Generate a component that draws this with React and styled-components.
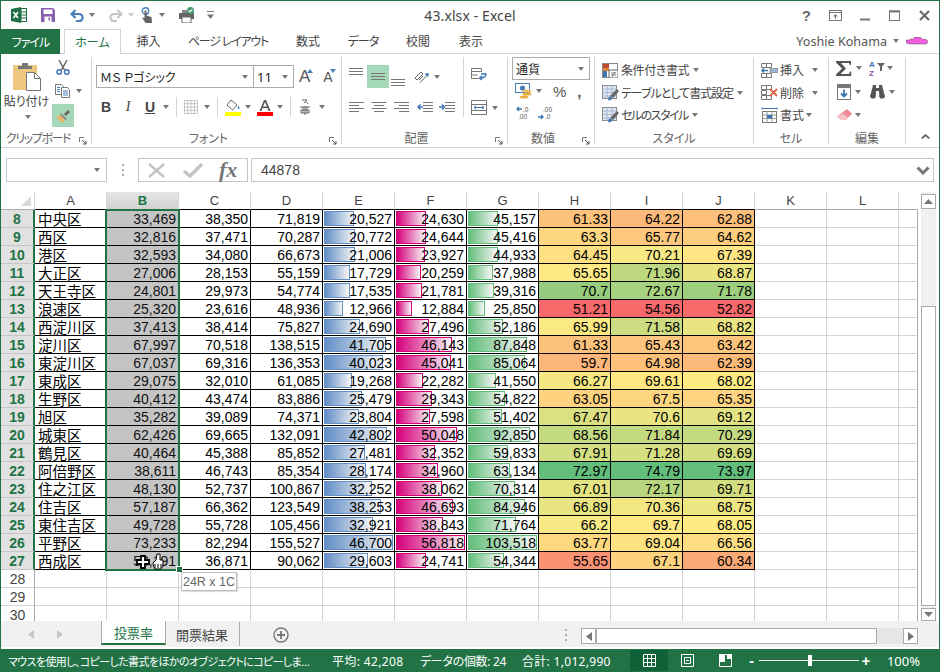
import React from 'react'
import styled, { createGlobalStyle } from 'styled-components'

const GREEN = '#217346'
const LINE = '#d4d4d4'

const GlobalStyle = createGlobalStyle`
  html, body { margin: 0; padding: 0; background: #fff; overflow: hidden; }
  * { box-sizing: border-box; }
`

const Window = styled.div`
  width: 940px;
  height: 672px;
  border: 1px solid ${GREEN};
  border-bottom: 0;
  display: flex;
  flex-direction: column;
  font-family: "Noto Sans", "Noto Sans CJK JP", sans-serif;
  font-feature-settings: "palt";
  font-size: 12px;
  color: #444;
  background: #fff;
  overflow: hidden;
`

const Svg = styled.svg`
  display: block;
  flex-shrink: 0;
  margin-left: ${(p) => p.$ml || 0}px;
  margin-top: ${(p) => p.$mt || 0}px;
`

const Caret = styled.span`
  display: block;
  flex-shrink: 0;
  width: 0;
  height: 0;
  margin-left: ${(p) => p.$ml || 0}px;
  margin-top: ${(p) => p.$mt || 0}px;
  border-left: 3.5px solid transparent;
  border-right: 3.5px solid transparent;
  border-top: 4px solid ${(p) => p.$color || '#777'};
`

/* ---------- title bar ---------- */
const TitleBar = styled.div`
  height: 28px;
  display: grid;
  grid-template-columns: 1fr auto 1fr;
  align-items: center;
`
const QuickAccess = styled.div`
  display: flex;
  align-items: center;
`
const TitleText = styled.div`
  font-size: 14px;
  color: #444;
  letter-spacing: 0.1px;
`
const WindowControls = styled.div`
  display: flex;
  justify-content: flex-end;
`
const WindowButton = styled.div`
  width: 29.5px;
  height: 24px;
  display: flex;
  align-items: center;
  justify-content: center;
  font: bold 15px "Liberation Sans", sans-serif;
  color: #6a6a6a;
`

/* ---------- tabs ---------- */
const TabRow = styled.div`
  height: 25px;
  display: flex;
  align-items: stretch;
  border-bottom: 1px solid ${LINE};
`
const FileTab = styled.div`
  width: 59px;
  margin-bottom: -1px;
  background: ${GREEN};
  color: #fff;
  display: flex;
  align-items: center;
  justify-content: center;
  font-size: 12px;
  letter-spacing: -1px;
`
const Tab = styled.div`
  width: ${(p) => p.$w}px;
  margin-left: ${(p) => p.$ml || 0}px;
  display: flex;
  align-items: center;
  justify-content: center;
  white-space: nowrap;
  letter-spacing: ${(p) => p.$ls || 0}px;
  color: ${(p) => (p.$active ? GREEN : '#444')};
  ${(p) =>
    p.$active &&
    `
    border: 1px solid ${LINE};
    border-bottom: 0;
    background: #fff;
    margin-bottom: -1px;
    padding-bottom: 1px;
  `}
`
const UserArea = styled.div`
  margin-left: auto;
  display: flex;
  align-items: center;
  padding-right: 11px;
  font-size: 12.6px;
  color: #555;
`

/* ---------- ribbon ---------- */
const Ribbon = styled.div`
  height: 94px;
  padding-top: 3px;
  display: flex;
  border-bottom: 1px solid ${LINE};
`
const Group = styled.div`
  width: ${(p) => p.$w}px;
  height: 87px;
  border-right: 1px solid ${LINE};
  display: flex;
  flex-direction: column;
  flex-shrink: 0;
`
const GroupBody = styled.div`
  height: 73px;
  flex-shrink: 0;
  display: flex;
`
const GroupLabel = styled.div`
  position: relative;
  height: 14px;
  line-height: 14px;
  margin-top: ${(p) => p.$mt ?? 2}px;
  display: flex;
  align-items: center;
  justify-content: center;
  padding-right: ${(p) => (p.$launcher ? 16 : 0)}px;
  color: #666;
  font-size: 12px;
  letter-spacing: ${(p) => p.$ls || 0}px;
  white-space: nowrap;
`
const Launcher = styled.svg`
  position: absolute;
  right: 4px;
  top: 5px;
`
const Column = styled.div`
  display: flex;
  flex-direction: column;
  align-items: ${(p) => p.$align || 'flex-start'};
  width: ${(p) => (p.$w ? `${p.$w}px` : 'auto')};
  padding-top: ${(p) => p.$pt || 0}px;
  ${(p) => p.$divider && `border-right: 1px solid ${LINE}; height: 60px;`}
`
const Row = styled.div`
  display: flex;
  align-items: center;
  height: ${(p) => p.$h}px;
  margin-top: ${(p) => p.$mt || 0}px;
  padding-left: ${(p) => p.$pl || 0}px;
`
const PasteLabel = styled.div`
  margin-top: 3px;
  line-height: 15px;
  font-size: 12px;
  color: #444;
  white-space: nowrap;
`
const HighlightButton = styled.div`
  width: ${(p) => p.$w}px;
  height: ${(p) => p.$h}px;
  margin-left: ${(p) => p.$ml || 0}px;
  margin-top: ${(p) => p.$mt || 0}px;
  background: #a5d8b8;
  display: flex;
  align-items: center;
  justify-content: center;
  flex-shrink: 0;
`
const ComboBox = styled.div`
  width: ${(p) => p.$w}px;
  height: 23px;
  margin-left: ${(p) => p.$ml || 0}px;
  border: 1px solid #ababab;
  background: #fff;
  display: flex;
  align-items: center;
  justify-content: space-between;
  padding: 0 5px 0 3px;
  color: #222;
  font-size: ${(p) => p.$fs || 12}px;
`
const GrowGlyph = styled.span`
  margin-left: ${(p) => p.$ml || 0}px;
  display: flex;
  align-items: flex-start;
  font: ${(p) => p.$size}px "Liberation Sans", sans-serif;
  line-height: 18px;
  color: #555;
`
const FormatGlyph = styled.span`
  width: 22px;
  text-align: center;
  font: ${(p) => (p.$italic ? 'italic 14px "Liberation Serif"' : 'bold 14px "Liberation Sans"')}, sans-serif;
  text-decoration: ${(p) => (p.$under ? 'underline' : 'none')};
  color: #444;
`
const VSep = styled.span`
  display: block;
  width: 1px;
  height: 20px;
  margin-left: ${(p) => p.$ml || 0}px;
  background: ${LINE};
  flex-shrink: 0;
`
const NumberGlyph = styled.span`
  margin-left: ${(p) => p.$ml}px;
  font: ${(p) => (p.$bold ? 'bold ' : '')}${(p) => p.$size || 15}px "Liberation Sans", sans-serif;
  color: #555;
`
const CommandRow = styled.div`
  display: flex;
  align-items: center;
  height: 22.5px;
  padding-left: 7px;
  color: #444;
`
const CommandText = styled.span`
  margin-left: ${(p) => p.$ml || 3}px;
  white-space: nowrap;
  letter-spacing: ${(p) => p.$ls || 0}px;
  width: ${(p) => (p.$w ? `${p.$w}px` : 'auto')};
`
const CollapseSlot = styled.div`
  flex: 1;
  display: flex;
  justify-content: flex-end;
  align-items: flex-end;
  padding: 0 9px 5px 0;
  height: 87px;
`

/* ---------- formula bar ---------- */
const FormulaBar = styled.div`
  height: 44px;
  padding: 10px 0 10px 5px;
  display: flex;
`
const NameBox = styled.div`
  width: 101px;
  border: 1px solid #c6c6c6;
  display: flex;
  align-items: center;
  justify-content: flex-end;
  padding-right: 6px;
`
const FormulaDots = styled.div`
  width: 31px;
  display: flex;
  justify-content: center;
  align-items: center;
`
const FxBox = styled.div`
  width: 110px;
  border: 1px solid #c6c6c6;
  display: flex;
  align-items: center;
  padding-left: 9px;
`
const FxGlyph = styled.span`
  margin-left: 16px;
  font: italic bold 22px "Liberation Serif", serif;
  color: #777;
  line-height: 22px;
`
const FormulaInput = styled.div`
  width: 683px;
  margin-left: 3px;
  border: 1px solid #c6c6c6;
  display: flex;
  align-items: center;
  justify-content: space-between;
  padding: 0 3px 0 9px;
  font: 14px "Liberation Sans", sans-serif;
  color: #444;
`

/* ---------- sheet ---------- */
const SheetArea = styled.div`
  height: 429px;
  display: flex;
`
const GridWrap = styled.div`
  position: relative;
  width: 920px;
  overflow: hidden;
`
const SheetGrid = styled.div`
  display: grid;
  grid-template-columns: 34px repeat(12, 72px) 19px;
  grid-auto-rows: 18px;
`
const CornerCell = styled.div`
  position: relative;
  border-right: 1px solid ${LINE};
  border-bottom: 1px solid #ababab;
`
const CornerMark = styled.svg`
  position: absolute;
  right: 3px;
  bottom: 3px;
`
const ColHead = styled.div`
  display: flex;
  align-items: center;
  justify-content: center;
  font: ${(p) => (p.$selected ? 'bold ' : '')}13px "Liberation Sans", sans-serif;
  color: ${(p) => (p.$selected ? GREEN : '#444')};
  background: ${(p) => (p.$selected ? 'linear-gradient(#e6e6e6, #d2d2d2)' : '#fff')};
  border-right: ${(p) => (p.$bare ? '0' : `1px solid ${LINE}`)};
  border-bottom: 1px solid ${(p) => (p.$table ? '#000' : '#ababab')};
`
const RowHead = styled.div`
  display: flex;
  align-items: center;
  justify-content: center;
  font: ${(p) => (p.$selected ? 'bold ' : '')}14px "Liberation Sans", sans-serif;
  color: ${(p) => (p.$selected ? GREEN : '#444')};
  background: ${(p) => (p.$selected ? '#e1e1e1' : '#fff')};
  border-right: ${(p) => (p.$selected ? `2px solid ${GREEN}` : '1px solid #ababab')};
  border-bottom: 1px solid ${(p) => (p.$selected ? '#c6c6c6' : LINE)};
`
const Cell = styled.div`
  position: relative;
  display: flex;
  align-items: center;
  justify-content: ${(p) => (p.$text ? 'flex-start' : 'flex-end')};
  padding: ${(p) => (p.$text ? '3px 0 0 3px' : '2px 2px 0 0')};
  font: ${(p) => (p.$text ? '14.5px "Liberation Sans", "Noto Sans CJK JP"' : '14px "Liberation Sans"')}, sans-serif;
  line-height: 15px;
  color: ${(p) => (p.$selected ? '#111' : '#000')};
  background: ${(p) => (p.$selected ? '#c4c4c4' : 'transparent')};
  border-right: 1px solid #000;
  border-bottom: 1px solid #000;
  white-space: nowrap;
`
const CellValue = styled.span`
  position: relative;
`
const BlankCell = styled.div`
  border-right: 1px solid ${(p) => (p.$edge ? '#ababab' : LINE)};
  border-bottom: 1px solid ${LINE};
`
const DataBar = styled.span`
  position: absolute;
  left: 1px;
  top: 1px;
  height: 15px;
  border: 1px solid ${(p) => p.$color};
  background: linear-gradient(90deg, ${(p) => p.$color}, #f6f6f6);
`
const SelectionBox = styled.div`
  position: absolute;
  left: 104px;
  top: 17px;
  width: 75px;
  height: 362px;
  border: 2px solid ${GREEN};
  pointer-events: none;
`
const FillHandle = styled.span`
  position: absolute;
  right: -5px;
  bottom: -4px;
  width: 7px;
  height: 7px;
  background: ${GREEN};
  border: 1px solid #fff;
`
const RangeTip = styled.div`
  position: absolute;
  left: 180px;
  top: 380px;
  width: 56px;
  height: 19px;
  background: #fff;
  border: 1px solid #bdbdbd;
  box-shadow: 1px 1px 1px #ddd;
  display: flex;
  align-items: center;
  justify-content: center;
  font: 12.5px "Liberation Sans", sans-serif;
  color: #666;
`
const BrushCursor = styled.svg`
  position: absolute;
  left: 134px;
  top: 361px;
`
const VScroll = styled.div`
  width: 15px;
  margin-left: 0;
  background: #f0f0f0;
  display: flex;
  flex-direction: column;
  padding-top: 2px;
  padding-bottom: 0;
`
const ScrollButton = styled.div`
  width: ${(p) => p.$w || 15}px;
  height: ${(p) => p.$h || 15}px;
  background: #fff;
  border: 1px solid #ababab;
  display: flex;
  align-items: center;
  justify-content: center;
  flex-shrink: 0;
`
const VThumb = styled.div`
  margin-top: ${(p) => p.$mt}px;
  height: ${(p) => p.$h}px;
  background: #fff;
  border: 1px solid #ababab;
`

/* ---------- sheet tabs ---------- */
const SheetBar = styled.div`
  height: 26px;
  background: #f1f1f1;
  display: flex;
  align-items: flex-start;
`
const SheetNav = styled.div`
  width: 100px;
  height: 26px;
  display: flex;
  align-items: center;
`
const SheetTab = styled.div`
  width: 65px;
  height: 24px;
  background: #fff;
  border-left: 1px solid #ababab;
  border-right: 1px solid #ababab;
  border-bottom: 2px solid ${GREEN};
  display: flex;
  align-items: center;
  justify-content: center;
  font-size: 13px;
  color: ${GREEN};
`
const SheetTabPlain = styled.div`
  width: 74px;
  height: 24px;
  margin-top: 1px;
  display: flex;
  align-items: center;
  padding-left: 10px;
  font-size: 13px;
  color: #444;
  border-right: 1px solid #ababab;
`
const HScroll = styled.div`
  width: 337px;
  height: 16px;
  margin-top: 7px;
  margin-left: 14px;
  background: #e6e6e6;
  display: flex;
`
const HThumb = styled.div`
  width: 281px;
  background: #fff;
  border: 1px solid #ababab;
`

/* ---------- status bar ---------- */
const StatusBar = styled.div`
  height: 23px;
  margin-top: 2px;
  background: ${GREEN};
  color: #fff;
  display: flex;
  align-items: center;
  font-size: 12px;
`
const StatusItem = styled.div`
  width: ${(p) => p.$w}px;
  padding-left: ${(p) => p.$pl || 0}px;
  font-size: ${(p) => p.$fs || 12}px;
  letter-spacing: ${(p) => p.$ls || 0}px;
  white-space: nowrap;
  overflow: hidden;
  flex-shrink: 0;
`
const ViewButton = styled.div`
  width: 38px;
  height: 21px;
  background: ${(p) => (p.$active ? '#0f6237' : 'transparent')};
  display: flex;
  align-items: center;
  justify-content: center;
`
const ZoomSign = styled.div`
  width: ${(p) => p.$w}px;
  text-align: center;
  font: bold 15px "Liberation Sans", sans-serif;
`
const ZoomSlider = styled.div`
  position: relative;
  width: 100px;
  height: 1px;
  background: #fff;
`
const ZoomThumb = styled.span`
  position: absolute;
  left: 49px;
  top: -5px;
  width: 4px;
  height: 11px;
  background: #fff;
`
const ZoomPercent = styled.div`
  flex: 1;
  text-align: right;
  padding-right: 19px;
  font-size: 13px;
`

/* ---------- icons ---------- */
const ExcelLogo = (p) => (
  <Svg {...p} width="16" height="16" viewBox="0 0 16 16">
    <rect x="6" y="1.5" width="9.5" height="13" fill="#fff" stroke="#1e7145" />
    <path d="M10 2v12M6 5h9M6 8h9M6 11h9" stroke="#1e7145" strokeWidth="1" />
    <path d="M0 2 10 0v16L0 14z" fill="#1e7145" />
    <path d="M2.5 5 7 11M7 5l-4.5 6" stroke="#fff" strokeWidth="1.6" />
  </Svg>
)
const SaveIcon = (p) => (
  <Svg {...p} width="14" height="14" viewBox="0 0 14 14">
    <path d="M0 0h12l2 2v12H0z" fill="#8a5fb0" />
    <rect x="2.5" y="1.5" width="9" height="4.5" fill="#fff" />
    <rect x="3.5" y="8.5" width="7" height="5.5" fill="#fff" />
    <rect x="7.5" y="9.5" width="1.5" height="3" fill="#8a5fb0" />
  </Svg>
)
const UndoIcon = ({ flip, color, ...p }) => (
  <Svg {...p} width="14" height="13" viewBox="0 0 14 13" style={flip ? { transform: 'scaleX(-1)' } : undefined}>
    <path d="M5.5 1 1.5 5l4 4M1.5 5H9a3.6 3.6 0 0 1 0 7.2H6" fill="none" stroke={color} strokeWidth="2.2" />
  </Svg>
)
const TouchIcon = (p) => (
  <Svg {...p} width="13" height="16" viewBox="0 0 13 16">
    <circle cx="4.5" cy="4" r="3.2" fill="none" stroke="#4a7ebb" strokeWidth="1.4" />
    <path d="M3.5 3.5h2v5l5 1.5.5 6H4.5L1 10.5l2.5.5z" fill="#666" />
  </Svg>
)
const PrintIcon = (p) => (
  <Svg {...p} width="16" height="16" viewBox="0 0 16 16">
    <path d="M3 3h6v4H3z" fill="#888" />
    <rect x="0" y="6" width="15" height="6" fill="#666" />
    <rect x="3" y="10" width="9" height="6" fill="#fff" stroke="#666" />
    <circle cx="11.5" cy="3.5" r="3.5" fill="#3f9b6c" />
    <path d="m9.6 3.5 1.4 1.4 2.4-2.6" fill="none" stroke="#fff" strokeWidth="1.1" />
  </Svg>
)
const CustomizeIcon = (p) => (
  <Svg {...p} width="7" height="8" viewBox="0 0 7 8">
    <path d="M0 .5h7" stroke="#777" />
    <path d="M0 3.5h7L3.5 8z" fill="#777" />
  </Svg>
)
const RibbonModeIcon = () => (
  <Svg width="13" height="11" viewBox="0 0 13 11">
    <rect x=".5" y=".5" width="12" height="10" fill="none" stroke="#777" />
    <path d="M.5 2.5h12" stroke="#777" />
    <path d="M6.5 4 4 6.5h2V9h1V6.5h2z" fill="#777" />
  </Svg>
)
const MinimizeIcon = () => (
  <Svg width="10" height="11" viewBox="0 0 10 11">
    <path d="M0 9.5h10" stroke="#777" strokeWidth="2" />
  </Svg>
)
const MaximizeIcon = () => (
  <Svg width="11" height="11" viewBox="0 0 11 11">
    <rect x=".5" y="1" width="10" height="9.5" fill="none" stroke="#777" />
    <path d="M0 1.5h11" stroke="#777" strokeWidth="2" />
  </Svg>
)
const CloseIcon = () => (
  <Svg width="11" height="11" viewBox="0 0 11 11">
    <path d="M1 1l9 9M10 1l-9 9" stroke="#6a6a6a" strokeWidth="2.2" />
  </Svg>
)
const PinkCar = () => (
  <Svg $ml={7} width="22" height="8" viewBox="0 0 22 8">
    <path d="M0 3h3l2-1h2l2-2h5l2 2 4 .5c2 .5 2 4 0 4.5H3L1 6H0z" fill="#f05fe0" stroke="#333" strokeWidth=".4" />
  </Svg>
)
const PasteIcon = () => (
  <Svg width="28" height="28" viewBox="0 0 28 28">
    <rect x="0" y="2" width="24" height="25" fill="#edc87e" />
    <path d="M5 3h4V0h6v3h4v3H5z" fill="#777" />
    <path d="M13.5 9.5h8l6 6v12h-14z" fill="#fff" stroke="#777" />
    <path d="M21.5 9.5v6h6" fill="none" stroke="#777" />
  </Svg>
)
const CutIcon = (p) => (
  <Svg {...p} width="14" height="15" viewBox="0 0 14 15">
    <path d="M3 0l5.5 10M11 0 5.5 10" stroke="#666" strokeWidth="1.5" />
    <circle cx="3.2" cy="12" r="2.3" fill="none" stroke="#3e75b2" strokeWidth="1.4" />
    <circle cx="10.8" cy="12" r="2.3" fill="none" stroke="#3e75b2" strokeWidth="1.4" />
  </Svg>
)
const CopyIcon = (p) => (
  <Svg {...p} width="15" height="14" viewBox="0 0 15 14">
    <path d="M.5.5h6l2 2v8H.5z" fill="#fff" stroke="#777" />
    <path d="M6.5 3.5h6l2 2v8h-8z" fill="#fff" stroke="#777" />
    <path d="M2 3.5h3M2 5.5h3M2 7.5h3M8 7h5M8 9h5M8 11h5" stroke="#4a7ebb" />
  </Svg>
)
const PainterIcon = () => (
  <Svg width="16" height="16" viewBox="0 0 16 16">
    <path d="M9 6l4-4 2 2-4 4z" fill="#666" />
    <path d="M6 5l6 6-2 1-5-5z" fill="#888" />
    <path d="M5 7l5 5-2.5 3L1 9.5z" fill="#e4b66a" />
  </Svg>
)
const CaretUp = ({ color }) => (
  <Svg width="6" height="4" viewBox="0 0 6 4" $ml={-3} $mt={1}>
    <path d="M0 4h6L3 0z" fill={color} />
  </Svg>
)
const CaretDownBlue = () => (
  <Svg width="6" height="4" viewBox="0 0 6 4" $ml={-3} $mt={1}>
    <path d="M0 0h6L3 4z" fill="#4a7ebb" />
  </Svg>
)
const BordersIcon = (p) => (
  <Svg {...p} width="14" height="14" viewBox="0 0 14 14">
    <path d="M.5.5h13v13H.5zM7 .5v13M.5 7h13M3.7.5v13M10.3.5v13M.5 3.7h13M.5 10.3h13" fill="none" stroke="#999" strokeDasharray="1 1" />
  </Svg>
)
const FillColorIcon = (p) => (
  <Svg {...p} width="16" height="17" viewBox="0 0 16 17">
    <path d="M6 1l6 5-4.5 5L2 6z" fill="#fff" stroke="#666" />
    <path d="M13 6.5c1.5 2 2 3 1 3.6s-1.8-.6-1-3.6z" fill="#4a7ebb" />
    <rect y="13" width="16" height="4" fill="#ffff00" />
  </Svg>
)
const FontColorIcon = (p) => (
  <Svg {...p} width="16" height="17" viewBox="0 0 16 17">
    <path d="M2.5 12 7 1h2l4.5 11h-2l-1-3h-5l-1 3zM6 7.5h4L8 3z" fill="#555" fillRule="evenodd" />
    <rect y="13" width="16" height="4" fill="#ff0000" />
  </Svg>
)
const PhoneticIcon = (p) => (
  <Svg {...p} width="10" height="16" viewBox="0 0 10 16">
    <path d="M2 1h5L4 4M6 2.5 8 5" fill="none" stroke="#666" />
    <path d="M0 8h10M5 7v9M1 11h8v3H1zM3 8v6M7 8v6" fill="none" stroke="#666" />
  </Svg>
)
const LinesIcon = ({ widths = [14, 14, 14], align = 'left', gap = 3, ...p }) => {
  const total = 16
  return (
    <Svg {...p} width={total} height={gap * (widths.length - 1) + 1} viewBox={`0 0 ${total} ${gap * (widths.length - 1) + 1}`}>
      {widths.map((w, i) => {
        const x = align === 'left' ? 0 : align === 'right' ? total - w : (total - w) / 2
        return <rect key={i} x={x} y={i * gap} width={w} height="1" fill="#777" />
      })}
    </Svg>
  )
}
const OrientIcon = (p) => (
  <Svg {...p} width="15" height="12" viewBox="0 0 15 12">
    <path d="M1 7l6-6 2 2-6 6zM5 9l4-4" fill="none" stroke="#666" />
    <path d="M6 11.5l7-7" stroke="#666" />
    <path d="M15 2l-4.5.7 3.6 3.6z" fill="#4a7ebb" />
  </Svg>
)
const IndentIcon = ({ mirror, ...p }) => (
  <Svg {...p} width="16" height="11" viewBox="0 0 16 11">
    <path d="M6 .5h10M6 3.5h10M6 6.5h10M6 9.5h10" stroke="#777" />
    {mirror ? (
      <path d="M0 5h4M3 2.5 5.5 5 3 7.5" fill="none" stroke="#3e75b2" strokeWidth="1.5" />
    ) : (
      <path d="M1 5h5M3.5 2.5 1 5l2.5 2.5" fill="none" stroke="#3e75b2" strokeWidth="1.5" />
    )}
  </Svg>
)
const WrapIcon = (p) => (
  <Svg {...p} width="16" height="14" viewBox="0 0 16 14">
    <path d="M.5.5h10v3H.5zM.5 3.5v7h7M.5 7h6" fill="none" stroke="#777" />
    <path d="M10 6h5c0 3-2 4-6 4M11 8l-2.5 2 2.5 2" fill="none" stroke="#3e75b2" strokeWidth="1.4" />
  </Svg>
)
const MergeIcon = (p) => (
  <Svg {...p} width="16" height="15" viewBox="0 0 16 15">
    <path d="M.5.5h15v14H.5zM.5 4.5h15M.5 10.5h15" fill="#fff" stroke="#777" />
    <path d="M3 7.5h10M5 5.8 3 7.5l2 1.7M11 5.8l2 1.7-2 1.7" fill="none" stroke="#3e75b2" />
  </Svg>
)
const CurrencyIcon = (p) => (
  <Svg {...p} width="17" height="16" viewBox="0 0 17 16">
    <rect x=".5" y=".5" width="14" height="9" fill="#fff" stroke="#4a7ebb" />
    <circle cx="7.5" cy="5" r="2.6" fill="#4a7ebb" />
    <ellipse cx="12" cy="8" rx="4.5" ry="1.5" fill="#f0c060" />
    <ellipse cx="12" cy="11" rx="4.5" ry="1.5" fill="#e8b040" />
    <ellipse cx="9" cy="14" rx="4.5" ry="1.5" fill="#e8b040" />
  </Svg>
)
const DecimalIcon = ({ more, ...p }) => (
  <Svg {...p} width="15" height="14" viewBox="0 0 15 14">
    <path d={more ? 'M0 11h5M3 9l2 2-2 2' : 'M1 3h5M3 1 1 3l2 2'} fill="none" stroke="#3e75b2" strokeWidth="1.3" />
    <text x={more ? 5 : 7} y="6" fontSize="6.5" fontFamily="Liberation Sans" fill="#555">{more ? '.00' : '.0'}</text>
    <text x={more ? 7 : 2} y="13" fontSize="6.5" fontFamily="Liberation Sans" fill="#555">{more ? '.0' : '.00'}</text>
  </Svg>
)
const CondFormatIcon = () => (
  <Svg width="16" height="15" viewBox="0 0 16 15">
    <rect x=".5" y=".5" width="15" height="14" fill="#fff" stroke="#888" />
    <rect x="1" y="1" width="6" height="4" fill="#c0492f" />
    <rect x="1" y="5" width="6" height="3" fill="#e0803a" />
    <rect x="1" y="8" width="4" height="6" fill="#3e75b2" />
    <rect x="7" y="7" width="9" height="8" fill="#fff" stroke="#666" />
    <path d="M9 10h5M9 12h5M13 9l-3 5" stroke="#666" strokeWidth=".8" />
  </Svg>
)
const TableStyleIcon = () => (
  <Svg width="17" height="16" viewBox="0 0 17 16">
    <rect x=".5" y=".5" width="14" height="13" fill="#dfe7f3" stroke="#888" />
    <path d="M.5 4h14M.5 7.5h14M.5 11h14M5 .5v13M10 .5v13" stroke="#a9b9cf" />
    <path d="M15 4 8 11l3 2 6-7z" fill="#666" />
    <path d="M7 11.5c2 0 3 1 3 2s-2 2-4 2c1-1 0-3 1-4z" fill="#3e75b2" />
  </Svg>
)
const CellInsertIcon = () => (
  <Svg width="17" height="15" viewBox="0 0 17 15">
    <path d="M.5.5h5v4h-5zM5.5.5h5v4h-5zM.5 10.5h5v4h-5zM5.5 10.5h5v4h-5z" fill="#fff" stroke="#777" />
    <rect x="9" y="5.5" width="8" height="4" fill="#9db5d6" stroke="#777" strokeWidth=".6" />
    <path d="M1 7.5h6M3 5.5l-2 2 2 2" fill="none" stroke="#3e75b2" strokeWidth="1.4" />
  </Svg>
)
const CellDeleteIcon = () => (
  <Svg width="17" height="15" viewBox="0 0 17 15">
    <path d="M.5.5h5v4h-5zM5.5.5h5v4h-5zM.5 5.5h5v4h-5zM.5 10.5h5v4h-5zM5.5 10.5h5v4h-5z" fill="#fff" stroke="#777" />
    <path d="M9 4l7 7M16 4l-7 7" stroke="#e0604a" strokeWidth="1.8" />
  </Svg>
)
const CellFormatIcon = () => (
  <Svg width="17" height="16" viewBox="0 0 17 16">
    <path d="M1 1.5h15M1 .5v2M16 .5v2" stroke="#3e75b2" />
    <rect x="1.5" y="4.5" width="14" height="11" fill="#fff" stroke="#777" />
    <path d="M1.5 8h14M1.5 11.5h14M6 4.5v11M11 4.5v11" stroke="#999" />
    <rect x="6" y="8" width="5" height="3.5" fill="#3e75b2" />
  </Svg>
)
const SigmaIcon = (p) => (
  <Svg {...p} width="16" height="15" viewBox="0 0 16 15">
    <path d="M0 0h15v4h-1.2l-.8-2H5l5 5.5L4.5 13H13l1-2.5h1.2V15H0v-1.5L6 7.5 0 1.5z" fill="#555" />
  </Svg>
)
const SortIcon = (p) => (
  <Svg {...p} width="17" height="16" viewBox="0 0 17 16">
    <text x="0" y="7" fontSize="8" fontWeight="bold" fontFamily="Liberation Sans" fill="#3e75b2">A</text>
    <text x="0" y="15.5" fontSize="8" fontWeight="bold" fontFamily="Liberation Sans" fill="#7f5aa8">Z</text>
    <path d="M8 3h8l-3 3.5V11h-2V6.5z" fill="#666" />
  </Svg>
)
const FillDownIcon = (p) => (
  <Svg {...p} width="14" height="16" viewBox="0 0 14 16">
    <rect x=".5" y=".5" width="13" height="15" fill="#fff" stroke="#777" />
    <rect x="1" y="1" width="12" height="3" fill="#777" />
    <path d="M7 5.5v7M4 9.5l3 3 3-3" fill="none" stroke="#3e75b2" strokeWidth="1.8" />
  </Svg>
)
const BinocularsIcon = (p) => (
  <Svg {...p} width="15" height="14" viewBox="0 0 15 14">
    <path d="M3 0h3v3h3V0h3l3 12H9.5L9 6H6l-.5 6H0z" fill="#555" />
    <circle cx="3" cy="11" r="2.6" fill="#555" />
    <circle cx="12" cy="11" r="2.6" fill="#555" />
  </Svg>
)
const EraserIcon = (p) => (
  <Svg {...p} width="15" height="12" viewBox="0 0 15 12">
    <path d="M10 0l5 4.5L9 11H4L0 7.5z" fill="#ec8a95" />
    <path d="M0 7.5 4 11h5l2-2.2-5-4z" fill="#f6c5ca" />
  </Svg>
)
const ChevronUp = () => (
  <Svg width="9" height="5" viewBox="0 0 9 5">
    <path d="M.7 4.5 4.5 1l3.8 3.5" fill="none" stroke="#666" strokeWidth="1.7" />
  </Svg>
)
const LauncherMark = () => (
  <Launcher width="8" height="8" viewBox="0 0 8 8">
    <path d="M.5 5V.5H5" fill="none" stroke="#777" />
    <path d="M3 3l4 4M7 4v3H4" fill="none" stroke="#555" />
  </Launcher>
)
const DotsIcon = (p) => (
  <Svg {...p} width="2" height="12" viewBox="0 0 2 12">
    <path d="M0 0h2v2H0zM0 5h2v2H0zM0 10h2v2H0z" fill="#aaa" />
  </Svg>
)
const TriIcon = ({ dir, color = '#777', ...p }) => (
  <Svg {...p} width="6" height="9" viewBox="0 0 6 9" style={dir === 'left' ? { transform: 'scaleX(-1)' } : undefined}>
    <path d="M0 0l6 4.5L0 9z" fill={color} />
  </Svg>
)
const UpTri = ({ flip }) => (
  <Svg width="9" height="5" viewBox="0 0 9 5" style={flip ? { transform: 'scaleY(-1)' } : undefined}>
    <path d="M0 5h9L4.5 0z" fill="#777" />
  </Svg>
)

/* ---------- data ---------- */
const DATA = `中央区 33,469 38,350 71,819 20,527 24,630 45,157 61.33 64.22 62.88
西区 32,816 37,471 70,287 20,772 24,644 45,416 63.3 65.77 64.62
港区 32,593 34,080 66,673 21,006 23,927 44,933 64.45 70.21 67.39
大正区 27,006 28,153 55,159 17,729 20,259 37,988 65.65 71.96 68.87
天王寺区 24,801 29,973 54,774 17,535 21,781 39,316 70.7 72.67 71.78
浪速区 25,320 23,616 48,936 12,966 12,884 25,850 51.21 54.56 52.82
西淀川区 37,413 38,414 75,827 24,690 27,496 52,186 65.99 71.58 68.82
淀川区 67,997 70,518 138,515 41,705 46,143 87,848 61.33 65.43 63.42
東淀川区 67,037 69,316 136,353 40,023 45,041 85,064 59.7 64.98 62.39
東成区 29,075 32,010 61,085 19,268 22,282 41,550 66.27 69.61 68.02
生野区 40,412 43,474 83,886 25,479 29,343 54,822 63.05 67.5 65.35
旭区 35,282 39,089 74,371 23,804 27,598 51,402 67.47 70.6 69.12
城東区 62,426 69,665 132,091 42,802 50,048 92,850 68.56 71.84 70.29
鶴見区 40,464 45,388 85,852 27,481 32,352 59,833 67.91 71.28 69.69
阿倍野区 38,611 46,743 85,354 28,174 34,960 63,134 72.97 74.79 73.97
住之江区 48,130 52,737 100,867 32,252 38,062 70,314 67.01 72.17 69.71
住吉区 57,187 66,362 123,549 38,253 46,693 84,946 66.89 70.36 68.75
東住吉区 49,728 55,728 105,456 32,921 38,843 71,764 66.2 69.7 68.05
平野区 73,233 82,294 155,527 46,700 56,818 103,518 63.77 69.04 66.56
西成区 53,191 36,871 90,062 29,603 24,741 54,344 55.65 67.1 60.34`
  .split('\n')
  .map((line) => line.split(' '))

const COLUMNS = ['A', 'B', 'C', 'D', 'E', 'F', 'G', 'H', 'I', 'J', 'K', 'L']
const BAR_COLORS = { 4: '#638ec6', 5: '#d6007b', 6: '#63be7b' }
const toNum = (s) => Number(s.replace(/,/g, ''))

const columnValues = (i) => DATA.map((r) => toNum(r[i]))

const lerp = (a, b, t) => a.map((v, i) => Math.round(v + (b[i] - v) * t))
const RED = [248, 105, 107]
const YELLOW = [255, 235, 132]
const LEAF = [99, 190, 123]

const scaleColor = (v, vals) => {
  const sorted = [...vals].sort((a, b) => a - b)
  const mid = (sorted[9] + sorted[10]) / 2
  const rgb =
    v < mid
      ? lerp(RED, YELLOW, (v - sorted[0]) / (mid - sorted[0]))
      : lerp(YELLOW, LEAF, (v - mid) / (sorted[19] - mid))
  return `rgb(${rgb.join(',')})`
}

const DataCell = ({ value, index }) => {
  if (index === 0) return <Cell $text>{value}</Cell>
  if (BAR_COLORS[index]) {
    const max = Math.max(...columnValues(index))
    return (
      <Cell>
        <DataBar $color={BAR_COLORS[index]} style={{ width: (69 * toNum(value)) / max }} />
        <CellValue>{value}</CellValue>
      </Cell>
    )
  }
  if (index >= 7) {
    return <Cell style={{ background: scaleColor(toNum(value), columnValues(index)) }}>{value}</Cell>
  }
  return <Cell $selected={index === 1}>{value}</Cell>
}

const Sheet = () => (
  <SheetGrid>
    <CornerCell>
      <CornerMark width="10" height="10" viewBox="0 0 10 10">
        <path d="M10 0v10H0z" fill="#d8d8d8" />
      </CornerMark>
    </CornerCell>
    {COLUMNS.map((c, i) => (
      <ColHead key={c} $selected={c === 'B'} $table={i < 10}>
        {c}
      </ColHead>
    ))}
    <ColHead $bare />
    {DATA.map((row, r) => (
      <React.Fragment key={row[0]}>
        <RowHead $selected>{r + 8}</RowHead>
        {row.map((value, i) => (
          <DataCell key={i} value={value} index={i} />
        ))}
        <BlankCell />
        <BlankCell />
        <BlankCell $edge />
      </React.Fragment>
    ))}
    {[28, 29, 30].map((n) => (
      <React.Fragment key={n}>
        <RowHead>{n}</RowHead>
        {COLUMNS.map((c) => (
          <BlankCell key={c} />
        ))}
        <BlankCell $edge />
      </React.Fragment>
    ))}
  </SheetGrid>
)

export default function App() {
  return (
    <Window>
      <GlobalStyle />
      <TitleBar>
        <QuickAccess>
          <ExcelLogo $ml={10} />
          <SaveIcon $ml={14} />
          <UndoIcon $ml={15} color="#4a7ebb" />
          <Caret $ml={5} />
          <UndoIcon $ml={14} flip color="#c4c4c4" />
          <Caret $ml={5} $color="#ccc" />
          <TouchIcon $ml={7} />
          <Caret $ml={5} />
          <PrintIcon $ml={14} />
          <CustomizeIcon $ml={12} />
        </QuickAccess>
        <TitleText>43.xlsx - Excel</TitleText>
        <WindowControls>
          <WindowButton>?</WindowButton>
          <WindowButton><RibbonModeIcon /></WindowButton>
          <WindowButton><MinimizeIcon /></WindowButton>
          <WindowButton><MaximizeIcon /></WindowButton>
          <WindowButton><CloseIcon /></WindowButton>
        </WindowControls>
      </TitleBar>

      <TabRow>
        <FileTab>ファイル</FileTab>
        <Tab $active $w={57} $ml={4}>ホーム</Tab>
        <Tab $w={55}>挿入</Tab>
        <Tab $w={104} $ls={-1.2}>ページ レイアウト</Tab>
        <Tab $w={56}>数式</Tab>
        <Tab $w={54} $ls={-1}>データ</Tab>
        <Tab $w={56}>校閲</Tab>
        <Tab $w={50}>表示</Tab>
        <UserArea>
          Yoshie Kohama
          <Caret $ml={6} />
          <PinkCar />
        </UserArea>
      </TabRow>

      <Ribbon>
        <Group $w={91}>
          <GroupBody>
            <Column $w={51} $align="center" $pt={6}>
              <PasteIcon />
              <PasteLabel>貼り付け</PasteLabel>
              <Caret $ml={3} $mt={6} />
            </Column>
            <Column $pt={3}>
              <CutIcon $ml={4} />
              <Row $h={14} $mt={9} $pl={3}>
                <CopyIcon />
                <Caret $ml={6} />
              </Row>
              <HighlightButton $w={22} $h={23} $mt={6}><PainterIcon /></HighlightButton>
            </Column>
          </GroupBody>
          <GroupLabel $launcher $ls={-1.4}>
            クリップボード
            <LauncherMark />
          </GroupLabel>
        </Group>

        <Group $w={250}>
          <GroupBody>
            <Column $pt={8}>
              <Row $h={23} $pl={4}>
                <ComboBox $w={158}>
                  ＭＳ Ｐゴシック
                  <Caret />
                </ComboBox>
                <ComboBox $w={41} $ml={-1} $fs={13}>
                  11
                  <Caret />
                </ComboBox>
                <GrowGlyph $ml={5} $size={17}>A<CaretUp color="#4a7ebb" /></GrowGlyph>
                <GrowGlyph $ml={10} $size={14}>A<CaretDownBlue /></GrowGlyph>
              </Row>
              <Row $h={20} $mt={9} $pl={3}>
                <FormatGlyph>B</FormatGlyph>
                <FormatGlyph $italic>I</FormatGlyph>
                <FormatGlyph $under>U</FormatGlyph>
                <Caret $ml={2} />
                <VSep $ml={7} />
                <BordersIcon $ml={7} />
                <Caret $ml={6} />
                <VSep $ml={7} />
                <FillColorIcon $ml={7} />
                <Caret $ml={4} />
                <FontColorIcon $ml={6} />
                <Caret $ml={4} />
                <VSep $ml={7} />
                <PhoneticIcon $ml={9} />
                <Caret $ml={9} />
              </Row>
            </Column>
          </GroupBody>
          <GroupLabel $launcher>
            フォント
            <LauncherMark />
          </GroupLabel>
        </Group>

        <Group $w={166}>
          <GroupBody>
            <Column $w={122} $divider $pt={8}>
              <Row $h={23} $pl={7}>
                <LinesIcon widths={[14, 14, 14]} gap={3} style={{ marginTop: -11 }} />
                <HighlightButton $w={22} $h={23} $ml={2}>
                  <LinesIcon widths={[14, 14, 14]} align="center" gap={3} />
                </HighlightButton>
                <LinesIcon $ml={2} widths={[14, 14, 14]} gap={3} style={{ marginTop: 11 }} />
                <OrientIcon $ml={7} />
                <Caret $ml={5} />
              </Row>
              <Row $h={20} $mt={9} $pl={7}>
                <LinesIcon widths={[15, 10, 15, 10]} gap={3} />
                <LinesIcon $ml={6} widths={[15, 10, 15, 10]} align="center" gap={3} />
                <LinesIcon $ml={6} widths={[15, 10, 15, 10]} align="right" gap={3} />
                <IndentIcon $ml={8} />
                <IndentIcon $ml={6} mirror />
              </Row>
            </Column>
            <Column $pt={11}>
              <WrapIcon $ml={7} />
              <Row $h={15} $mt={18} $pl={7}>
                <MergeIcon />
                <Caret $ml={5} />
              </Row>
            </Column>
          </GroupBody>
          <GroupLabel $launcher>
            配置
            <LauncherMark />
          </GroupLabel>
        </Group>

        <Group $w={87}>
          <GroupBody>
            <Column>
              <Row $h={23} $pl={4}>
                <ComboBox $w={78}>
                  通貨
                  <Caret />
                </ComboBox>
              </Row>
              <Row $h={16} $mt={3} $pl={7}>
                <CurrencyIcon />
                <Caret $ml={4} />
                <NumberGlyph $ml={11}>%</NumberGlyph>
                <NumberGlyph $ml={11} $bold>,</NumberGlyph>
              </Row>
              <Row $h={14} $mt={7} $pl={8}>
                <DecimalIcon />
                <DecimalIcon $ml={7} more />
              </Row>
            </Column>
          </GroupBody>
          <GroupLabel $launcher>
            数値
            <LauncherMark />
          </GroupLabel>
        </Group>

        <Group $w={159}>
          <GroupBody>
            <Column $pt={2}>
              <CommandRow>
                <CondFormatIcon />
                <CommandText $ls={-0.4}>条件付き書式</CommandText>
                <Caret $ml={4} />
              </CommandRow>
              <CommandRow>
                <TableStyleIcon />
                <CommandText $ml={2} $ls={-1}>テーブルとして書式設定</CommandText>
                <Caret $ml={4} />
              </CommandRow>
              <CommandRow>
                <TableStyleIcon />
                <CommandText $ml={2} $ls={-1.5}>セルのスタイル</CommandText>
                <Caret $ml={4} />
              </CommandRow>
            </Column>
          </GroupBody>
          <GroupLabel>スタイル</GroupLabel>
        </Group>

        <Group $w={75}>
          <GroupBody>
            <Column $pt={2}>
              <CommandRow>
                <CellInsertIcon />
                <CommandText $ml={2} $w={24}>挿入</CommandText>
                <Caret $ml={8} />
              </CommandRow>
              <CommandRow>
                <CellDeleteIcon />
                <CommandText $ml={2} $w={24}>削除</CommandText>
                <Caret $ml={8} />
              </CommandRow>
              <CommandRow>
                <CellFormatIcon />
                <CommandText $ml={2} $w={24}>書式</CommandText>
                <Caret $ml={2} />
              </CommandRow>
            </Column>
          </GroupBody>
          <GroupLabel>セル</GroupLabel>
        </Group>

        <Group $w={77}>
          <GroupBody>
            <Column $pt={3}>
              <Row $h={16} $pl={7}>
                <SigmaIcon />
                <Caret $ml={4} />
                <SortIcon $ml={7} />
                <Caret $ml={1} />
              </Row>
              <Row $h={16} $mt={8} $pl={8}>
                <FillDownIcon />
                <Caret $ml={4} />
                <BinocularsIcon $ml={9} />
                <Caret $ml={4} />
              </Row>
              <Row $h={12} $mt={9} $pl={8}>
                <EraserIcon />
                <Caret $ml={3} />
              </Row>
            </Column>
          </GroupBody>
          <GroupLabel>編集</GroupLabel>
        </Group>

        <CollapseSlot>
          <ChevronUp />
        </CollapseSlot>
      </Ribbon>

      <FormulaBar>
        <NameBox><Caret /></NameBox>
        <FormulaDots><DotsIcon /></FormulaDots>
        <FxBox>
          <Svg width="17" height="15" viewBox="0 0 17 15">
            <path d="M1 1l15 13M16 1 1 14" stroke="#c4c4c4" strokeWidth="2.4" />
          </Svg>
          <Svg $ml={18} width="20" height="15" viewBox="0 0 20 15">
            <path d="M1 8l6 5L19 1" fill="none" stroke="#c4c4c4" strokeWidth="3.4" />
          </Svg>
          <FxGlyph>fx</FxGlyph>
        </FxBox>
        <FormulaInput>
          44878
          <Svg width="14" height="9" viewBox="0 0 14 9">
            <path d="M1.5 1.5 7 7l5.5-5.5" fill="none" stroke="#777" strokeWidth="3" />
          </Svg>
        </FormulaInput>
      </FormulaBar>

      <SheetArea>
        <GridWrap>
          <Sheet />
          <SelectionBox>
            <FillHandle />
          </SelectionBox>
          <BrushCursor width="32" height="18" viewBox="0 0 32 18">
            <path d="M6 1h4v4h4v4h-4v4H6V9H2V5h4z" fill="#fff" stroke="#000" strokeWidth="1.8" transform="translate(0 2)" />
            <path d="M22 1h3v6h3v3c0 3-1 5-2 6h-6c-1-2-2-3-2-6l3-3z" fill="#fff" stroke="#000" strokeWidth="1" />
            <path d="M20 11v4M23 11v4M26 11v4" stroke="#000" />
          </BrushCursor>
          <RangeTip>24R x 1C</RangeTip>
        </GridWrap>
        <VScroll>
          <ScrollButton><UpTri /></ScrollButton>
          <VThumb $mt={97} $h={300} />
          <ScrollButton $h={13} style={{ marginTop: 2 }}><UpTri flip /></ScrollButton>
        </VScroll>
      </SheetArea>

      <SheetBar>
        <SheetNav>
          <TriIcon $ml={27} dir="left" color="#c6c6c6" />
          <TriIcon $ml={23} color="#c6c6c6" />
        </SheetNav>
        <SheetTab>投票率</SheetTab>
        <SheetTabPlain>開票結果</SheetTabPlain>
        <Svg $ml={33} $mt={6} width="16" height="16" viewBox="0 0 16 16">
          <circle cx="8" cy="8" r="7" fill="none" stroke="#777" strokeWidth="1.4" />
          <path d="M4 8h8M8 4v8" stroke="#777" strokeWidth="1.8" />
        </Svg>
        <DotsIcon $ml={276} $mt={8} />
        <HScroll>
          <ScrollButton $w={15} $h={16}><TriIcon dir="left" /></ScrollButton>
          <HThumb />
          <ScrollButton $w={15} $h={16} style={{ marginLeft: 26 }}><TriIcon /></ScrollButton>
        </HScroll>
      </SheetBar>

      <StatusBar>
        <StatusItem $w={331} $pl={7} $fs={11} $ls={-0.6}>マウスを使用し、コピーした書式をほかのオブジェクトにコピーしま…</StatusItem>
        <StatusItem $w={88} $ls={0.35}>平均: 42,208</StatusItem>
        <StatusItem $w={102} $ls={-0.3}>データの個数: 24</StatusItem>
        <StatusItem $w={108} $ls={0.3}>合計: 1,012,990</StatusItem>
        <ViewButton $active>
          <Svg width="13" height="13" viewBox="0 0 13 13">
            <path d="M.5.5h12v12H.5zM4.5.5v12M8.5.5v12M.5 4.5h12M.5 8.5h12" fill="none" stroke="#fff" />
          </Svg>
        </ViewButton>
        <ViewButton>
          <Svg width="13" height="13" viewBox="0 0 13 13">
            <path d="M.5.5h12v12H.5zM3.5 3.5h6v6h-6zM5 6.5h3" fill="none" stroke="#fff" />
          </Svg>
        </ViewButton>
        <ViewButton>
          <Svg width="13" height="13" viewBox="0 0 13 13">
            <path d="M.5.5h12v12H.5z" fill="none" stroke="#fff" />
            <path d="M0 0h6v8H0zM8 0h5v5H8z" fill="#fff" />
          </Svg>
        </ViewButton>
        <ZoomSign $w={15}>-</ZoomSign>
        <ZoomSlider><ZoomThumb /></ZoomSlider>
        <ZoomSign $w={14}>+</ZoomSign>
        <ZoomPercent>100%</ZoomPercent>
      </StatusBar>
    </Window>
  )
}
